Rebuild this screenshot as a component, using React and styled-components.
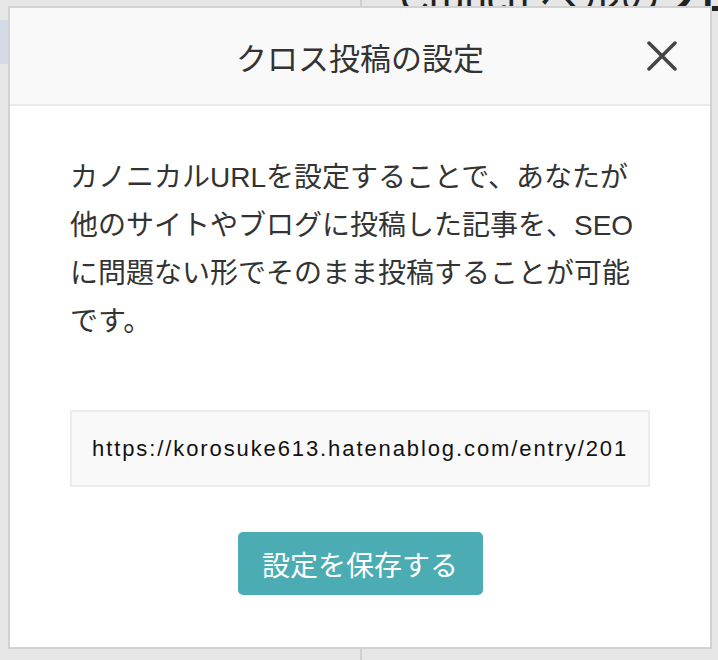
import React from 'react';
import styled, { createGlobalStyle } from 'styled-components';

const GlobalStyle = createGlobalStyle`
  html, body {
    margin: 0;
    padding: 0;
    background: #e6e6e6;
    font-family: "Liberation Sans", "Noto Sans CJK JP", sans-serif;
  }
`;

const Page = styled.div`
  position: relative;
  width: 718px;
  height: 660px;
  overflow: hidden;
  display: grid;
  grid-template-columns: 360px 1fr;
`;

const SideColumn = styled.div`
  padding-top: 20px;
`;

const SideItem = styled.div`
  width: 8px;
  height: 44px;
  background: #d5dbe6;
`;

const MainColumn = styled.div`
  border-left: 2px solid #cfcfcf;
  padding-left: 38px;
  overflow: hidden;
`;

const Headline = styled.h1`
  margin: -34px 0 0;
  font-size: 40px;
  font-weight: 400;
  color: #222;
  white-space: nowrap;

  b {
    font-weight: 700;
  }
`;

const Modal = styled.div`
  position: absolute;
  left: 8px;
  top: 6px;
  width: 704px;
  box-sizing: border-box;
  border: 2px solid #d2d2d2;
  background: #fff;
`;

const Header = styled.div`
  position: relative;
  height: 96px;
  display: flex;
  align-items: center;
  justify-content: center;
  background: #f9f9f9;
  border-bottom: 2px solid #e9e9ee;
`;

const Title = styled.h2`
  margin: 0;
  font-size: 31px;
  font-weight: 400;
  color: #333;
  font-family: "Noto Sans CJK JP", sans-serif;
`;

const CloseButton = styled.button`
  position: absolute;
  right: 33px;
  top: 50%;
  transform: translateY(-50%);
  width: 30px;
  height: 30px;
  padding: 0;
  border: 0;
  background: none;
  display: flex;
  align-items: center;
  justify-content: center;
  cursor: pointer;
`;

const Body = styled.div`
  padding: 48px 60px 52px;
`;

const Description = styled.p`
  margin: 0;
  font-size: 28px;
  line-height: 48px;
  color: #333;
  font-family: "Liberation Sans", "Noto Sans CJK JP", sans-serif;
`;

const UrlInput = styled.input`
  display: block;
  width: 100%;
  height: 77px;
  margin-top: 64px;
  box-sizing: border-box;
  padding: 0 20px;
  border: 2px solid #ececf0;
  background: #f9f9f9;
  font-family: "Liberation Sans", sans-serif;
  font-size: 22px;
  letter-spacing: 1.9px;
  color: #111;
  outline: none;
`;

const Actions = styled.div`
  margin-top: 45px;
  display: flex;
  justify-content: center;
`;

const SaveButton = styled.button`
  width: 245px;
  height: 63px;
  border: 0;
  border-radius: 5px;
  background: #4cacb3;
  color: #fff;
  font-size: 28px;
  font-family: "Noto Sans CJK JP", sans-serif;
  cursor: pointer;
`;

export default function App() {
  return (
    <>
      <GlobalStyle />
      <Page>
        <SideColumn>
          <SideItem />
        </SideColumn>
        <MainColumn>
          <Headline>Crunch ベルの<b>クロス投稿の</b></Headline>
        </MainColumn>

        <Modal>
          <Header>
            <Title>クロス投稿の設定</Title>
            <CloseButton aria-label="閉じる">
              <svg width="30" height="30" viewBox="0 0 30 30">
                <path d="M2 2 L28 28 M28 2 L2 28" stroke="#444" strokeWidth="3.5" strokeLinecap="round" fill="none" />
              </svg>
            </CloseButton>
          </Header>
          <Body>
            <Description>
              カノニカルURLを設定することで、あなたが他のサイトやブログに投稿した記事を、SEOに問題ない形でそのまま投稿することが可能です。
            </Description>
            <UrlInput readOnly value="https://korosuke613.hatenablog.com/entry/2019/03/10/crunch" />
            <Actions>
              <SaveButton>設定を保存する</SaveButton>
            </Actions>
          </Body>
        </Modal>
      </Page>
    </>
  );
}
